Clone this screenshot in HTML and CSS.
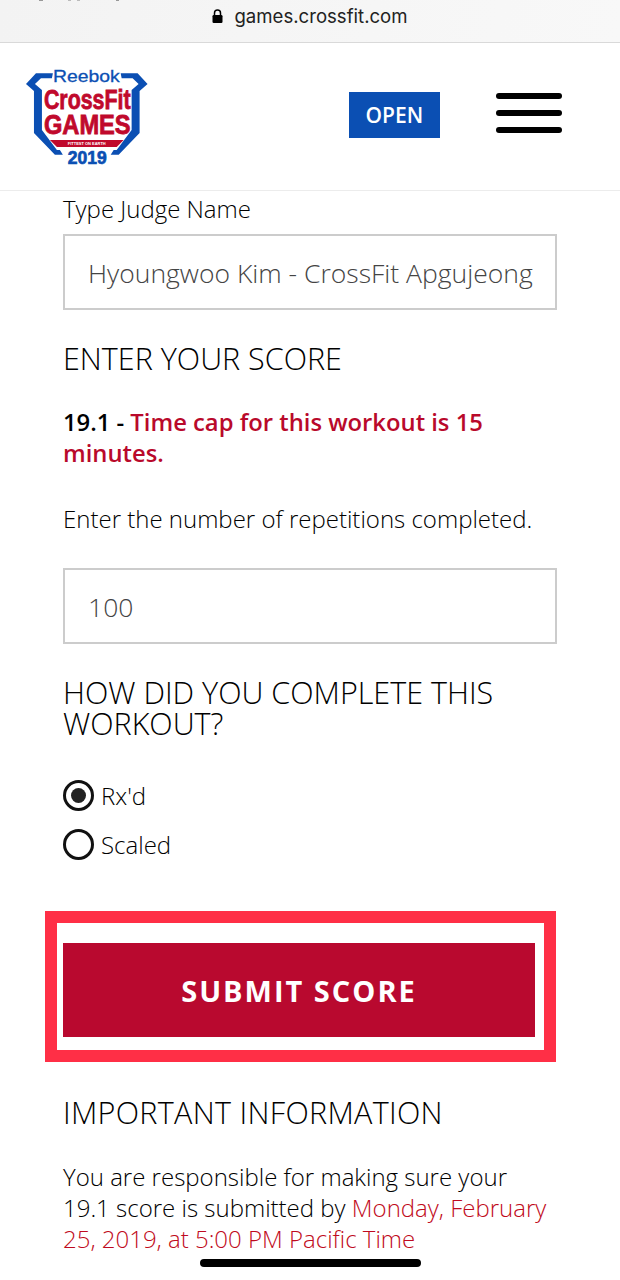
FILE: index.html
```html
<!DOCTYPE html>
<html lang="en">
<head>
  <meta charset="UTF-8" />
  <meta name="viewport" content="width=device-width, initial-scale=1.0"/>
  <title>Submit Score</title>
  <link rel="stylesheet" href="styles.css">
</head>
<body>
  <div class="url-bar">
    <svg class="clipped-row" width="120" height="2" viewBox="0 0 120 2">
      <rect x="4" width="4" height="1" fill="#999"/>
      <rect x="33" width="3" height="1" fill="#bbb"/>
      <rect x="42" width="3" height="1" fill="#bbb"/>
      <rect x="81" width="3" height="1" fill="#999"/>
    </svg>
    <svg class="lock" width="11" height="14" viewBox="0 0 11 14">
      <path d="M2.5 6V4a3 3 0 0 1 6 0v2" fill="none" stroke="#000" stroke-width="1.5"/>
      <rect x="0.5" y="6" width="10" height="8" rx="1.2" fill="#000"/>
    </svg>
    <span>games.crossfit.com</span>
  </div>

  <header class="site-header">
    <svg class="logo" width="124" height="100" viewBox="25 69 124 100">
      <path class="logo-blue" d="M53 75H36L26 86L34 93V135L55 157H63L60 152H57L42 132V92L35 86L41 80H52Z"/>
      <path class="logo-blue" d="M121 75H138L148 86L140 93V135L119 157H111L114 152H117L132 132V92L139 86L133 80H122Z"/>
      <text class="logo-reebok" x="53" y="84" textLength="67" lengthAdjust="spacingAndGlyphs">Reebok</text>
      <text class="logo-red crossfit" x="44" y="111" textLength="87" lengthAdjust="spacingAndGlyphs">CrossFit</text>
      <text class="logo-red" x="44" y="136" textLength="87" lengthAdjust="spacingAndGlyphs">GAMES</text>
      <path d="M50 142H124L117 149H57Z" fill="#c0092c"/>
      <text class="logo-tag" x="87" y="147.5" text-anchor="middle">FITTEST ON EARTH</text>
      <text class="logo-year" x="68" y="166" textLength="39" lengthAdjust="spacingAndGlyphs">2019</text>
    </svg>
    <a class="open-btn" href="#">OPEN</a>
    <div class="burger"><span></span><span></span><span></span></div>
  </header>

  <main class="content">
    <label class="field-label">Type Judge Name</label>
    <div class="text-field judge">Hyoungwoo Kim - CrossFit Apgujeong</div>

    <h2 class="score-title">ENTER YOUR SCORE</h2>
    <p class="cap-note"><b>19.1 - </b><b class="red">Time cap for this workout is 15 minutes.</b></p>
    <p class="reps-note">Enter the number of repetitions completed.</p>
    <div class="text-field reps">100</div>

    <h2 class="how-title">HOW DID YOU COMPLETE THIS WORKOUT?</h2>
    <div class="radio-row first"><span class="radio on"></span>Rx'd</div>
    <div class="radio-row"><span class="radio"></span>Scaled</div>

    <div class="highlight">
      <button class="submit-btn">SUBMIT SCORE</button>
    </div>

    <h2 class="info-title">IMPORTANT INFORMATION</h2>
    <p class="info-text">You are responsible for making sure your 19.1 score is submitted by <span class="deadline">Monday, February 25, 2019, at 5:00 PM Pacific Time</span></p>
  </main>

  <div class="home-bar"></div>
</body>
</html>
```

FILE: styles.css
```css
html, body {
  margin: 0;
  height: 1280px;
  overflow: hidden;
}

body {
  position: relative;
  background: #fff;
  color: #000;
  font-family: "Open Sans", "Liberation Sans", sans-serif;
  font-weight: 300;
  font-size: 24px;
  line-height: 31px;
}

.url-bar {
  position: relative;
  display: flex;
  align-items: center;
  justify-content: center;
  gap: 11px;
  padding-bottom: 11px;
  box-sizing: border-box;
  height: 43px;
  background: linear-gradient(100deg, #f3f3f3, #f8f8f8);
  border-bottom: 1px solid #d9d9d9;
  font-family: Inter, "Liberation Sans", sans-serif;
  font-weight: 400;
  font-size: 18.6px;
  line-height: 22px;
  color: #222;
}

/* bottom edge of the status bar text, cut off by the crop */
.clipped-row {
  position: absolute;
  top: 0;
  left: 35px;
}

.site-header {
  box-sizing: border-box;
  height: 148px;
  display: flex;
  align-items: center;
  border-bottom: 1px solid #ececec;
  padding: 0 58px 0 25px;
}

.logo-blue {
  fill: #0b4fb3;
}

.logo-reebok {
  font-family: "Liberation Sans", sans-serif;
  font-size: 17px;
  fill: #0b4fb3;
  stroke: #0b4fb3;
  stroke-width: 0.3;
}

.logo-red {
  font-family: "Liberation Sans", sans-serif;
  font-weight: 700;
  font-size: 27px;
  fill: #c0092c;
  stroke: #c0092c;
  stroke-width: 0.8;
}

.crossfit {
  font-size: 28px;
}

.logo-tag {
  font-family: "Liberation Sans", sans-serif;
  font-weight: 700;
  font-size: 4px;
  fill: #fff;
}

.logo-year {
  font-family: "Liberation Sans", sans-serif;
  font-weight: 700;
  font-size: 18px;
  fill: #0b4fb3;
  stroke: #0b4fb3;
  stroke-width: 0.7;
}

.open-btn {
  margin-left: 200px;
  margin-bottom: 3px;
  width: 92px;
  height: 46px;
  background: #0b4fb3;
  color: #fff;
  font-weight: 600;
  font-size: 21px;
  line-height: 46px;
  text-align: center;
  text-decoration: none;
}

.burger {
  margin-left: 56px;
  margin-bottom: 7px;
  width: 66px;
  display: flex;
  flex-direction: column;
  gap: 11px;
}

.burger span {
  height: 6px;
  border-radius: 3px;
  background: #000;
}

.content {
  padding: 2px 63px 0;
}

.field-label {
  display: block;
}

.text-field {
  box-sizing: border-box;
  height: 76px;
  border: 2px solid #ccc;
  padding-left: 23px;
  font-size: 26.5px;
  line-height: 74px;
  color: #444;
  white-space: nowrap;
}

.judge {
  margin-top: 10px;
}

h2 {
  margin: 0;
  font-weight: 300;
  font-size: 30.5px;
  line-height: 31px;
}

.score-title {
  margin-top: 33px;
}

p {
  margin: 0;
}

.cap-note {
  margin-top: 33px;
  font-size: 23.8px;
}

.cap-note b {
  font-weight: 600;
}

.red {
  color: #b9092b;
}

.deadline {
  color: #bf0a20;
}

.reps-note {
  margin-top: 34px;
}

.reps {
  margin-top: 34px;
}

.how-title {
  margin-top: 33px;
}

.radio-row {
  display: flex;
  align-items: center;
  gap: 7px;
  height: 32px;
  margin-top: 17px;
}

.radio-row.first {
  margin-top: 40px;
}

.radio {
  box-sizing: border-box;
  width: 31px;
  height: 31px;
  border: 3px solid #111;
  border-radius: 50%;
  display: flex;
  align-items: center;
  justify-content: center;
}

.radio.on::after {
  content: "";
  width: 15px;
  height: 15px;
  border-radius: 50%;
  background: #222;
}

.highlight {
  box-sizing: border-box;
  width: 511px;
  height: 151px;
  margin: 51px 0 0 -18px;
  padding: 20px 9px 13px 6px;
  border: 12px solid #ff2f46;
}

.submit-btn {
  display: block;
  width: 100%;
  height: 94px;
  border: none;
  background: #b9092f;
  color: #fff;
  font-family: inherit;
  font-weight: 700;
  font-size: 29px;
  letter-spacing: 2px;
}

.info-title {
  margin-top: 35px;
  letter-spacing: 0.3px;
}

.info-text {
  margin-top: 33px;
}

.home-bar {
  position: absolute;
  left: 200px;
  bottom: 13px;
  width: 221px;
  height: 8px;
  border-radius: 4px;
  background: #000;
}
```
